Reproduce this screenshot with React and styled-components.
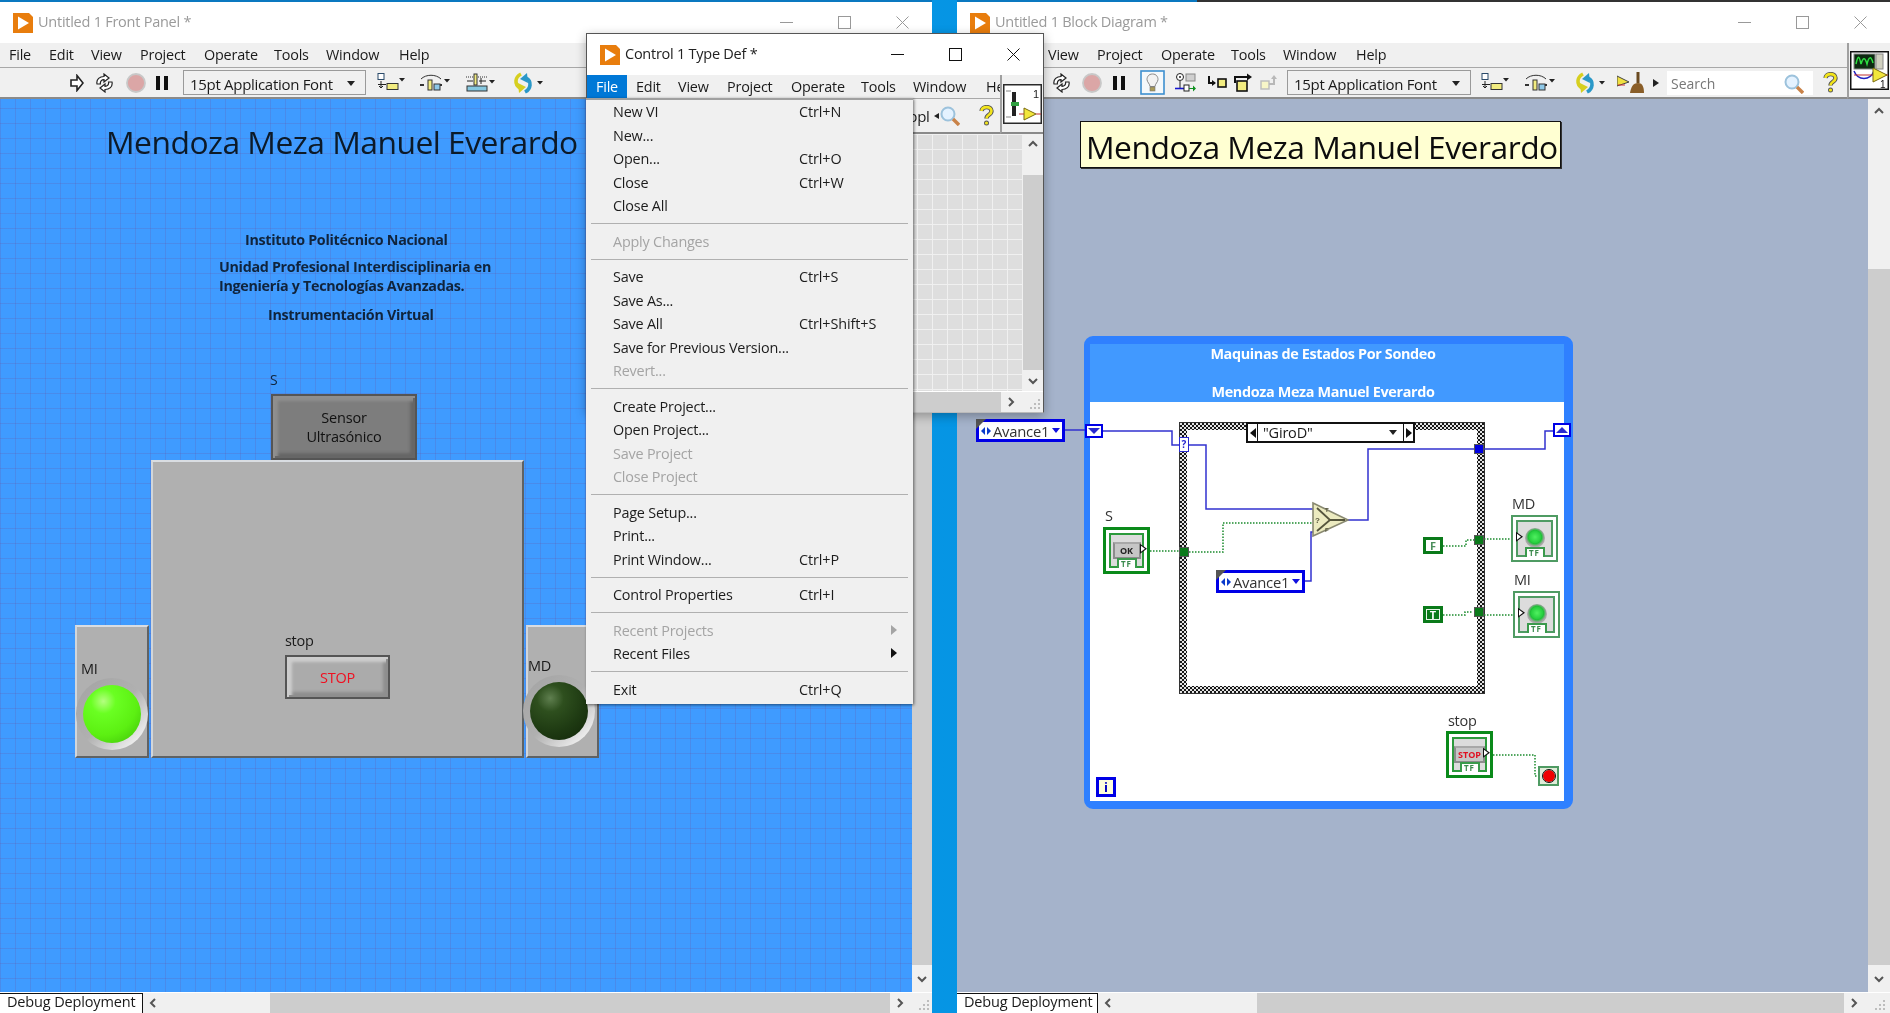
import React from "react";
import styled, { createGlobalStyle } from "styled-components";

const Global = createGlobalStyle`
  html, body { margin: 0; padding: 0; background: #0090e0; overflow: hidden; }
  * { box-sizing: border-box; }
`;

const UI = `"Open Sans", "Noto Sans", "Liberation Sans", sans-serif`;

const Desktop = styled.div`
  position: relative;
  width: 1890px;
  height: 1013px;
  overflow: hidden;
  font-family: ${UI};
  background: linear-gradient(90deg, #0b8ed8, #009cf0);
  color: #1a1a1a;
  filter: blur(0.35px);
`;

const Window = styled.section`
  position: absolute;
  left: ${(p) => p.$x}px;
  top: ${(p) => p.$y}px;
  width: ${(p) => p.$w}px;
  height: ${(p) => p.$h}px;
  display: flex;
  flex-direction: column;
  background: #f0f0f0;
  ${(p) => (p.$active ? "border: 1px solid #555; border-bottom-color:#bbb; box-shadow: 0 3px 10px rgba(0,0,0,.3);" : "")}
`;

const TopStrip = styled.div`
  height: 2px;
  flex: none;
  background: ${(p) => p.$bg};
`;

const TitleBar = styled.header`
  height: ${(p) => p.$h || 41}px;
  flex: none;
  display: flex;
  align-items: center;
  background: #fff;
  padding-left: ${(p) => p.$pad}px;
`;

const TitleText = styled.span`
  margin-left: 5px;
  margin-bottom: 2px;
  font-size: 14.5px;
  letter-spacing: -0.25px;
  color: ${(p) => (p.$active ? "#222" : "#9a9a9a")};
  white-space: nowrap;
`;

const WinButtons = styled.div`
  margin-left: auto;
  margin-right: 1px;
  display: flex;
`;

const WinButton = styled.span`
  width: 58px;
  height: 30px;
  display: flex;
  align-items: center;
  justify-content: center;
  color: ${(p) => (p.$active ? "#111" : "#999")};
`;

const HeadRow = styled.div`
  display: flex;
  flex: none;
`;

const HeadMain = styled.div`
  flex: 1;
  min-width: 0;
  overflow: hidden;
`;

const MenuBar = styled.nav`
  height: ${(p) => p.$h || 25}px;
  display: flex;
  align-items: center;
  background: #f0f0f0;
  padding-left: ${(p) => p.$pad ?? 9}px;
  padding-bottom: ${(p) => (p.$pad === 0 ? 0 : 2)}px;
  font-size: 14.4px;
  letter-spacing: -0.2px;
  border-bottom: 1px solid #a8a8a8;
  white-space: nowrap;
`;

const MenuEntry = styled.span`
  flex: none;
  width: ${(p) => p.$w}px;
`;

const ActiveEntry = styled.span`
  flex: none;
  width: 40px;
  margin-right: 9px;
  height: 100%;
  padding-left: 9px;
  display: flex;
  align-items: center;
  background: #0078d7;
  color: #fff;
`;

const Toolbar = styled.div`
  height: ${(p) => p.$h || 31}px;
  display: flex;
  align-items: center;
  background: #f0f0f0;
  border-bottom: 2px solid #8a8a8a;
  overflow: hidden;
`;

const Tool = styled.svg`
  flex: none;
  margin-left: ${(p) => p.$ml}px;
  display: block;
`;

const FontBox = styled.div`
  flex: none;
  margin-left: ${(p) => p.$ml}px;
  width: ${(p) => p.$w}px;
  height: 25px;
  border: 1px solid #9a9a9a;
  background: #f0f0f0;
  display: flex;
  align-items: center;
  justify-content: space-between;
  padding: 2px 10px 0 6px;
  font-size: 15px;
  letter-spacing: -0.3px;
  white-space: nowrap;
`;

const ClippedFont = styled.div`
  flex: none;
  margin-left: ${(p) => p.$ml}px;
  font-size: 15px;
  letter-spacing: -0.3px;
  white-space: nowrap;
`;

const Caret = styled.span`
  width: 0;
  height: 0;
  border-left: 4px solid transparent;
  border-right: 4px solid transparent;
  border-top: 5px solid #222;
`;

const SearchField = styled.div`
  flex: none;
  margin-left: ${(p) => p.$ml}px;
  width: 146px;
  height: 24px;
  background: #fff;
  display: flex;
  align-items: center;
  justify-content: space-between;
  padding: 2px 9px 0 4px;
  font-size: 14px;
  color: #777;
`;

const IconPane = styled.aside`
  flex: none;
  width: ${(p) => p.$w}px;
  background: #f0f0f0;
  border-left: 2px solid #a0a0a0;
  border-bottom: 2px solid #8a8a8a;
  display: flex;
  align-items: center;
  justify-content: center;
`;

const WorkRow = styled.div`
  flex: 1;
  min-height: 0;
  display: flex;
`;

const VScroll = styled.div`
  flex: none;
  width: ${(p) => p.$w}px;
  background: #f0f0f0;
  display: flex;
  flex-direction: column;
  align-items: center;
`;

const ChevronZone = styled.div`
  flex: none;
  height: ${(p) => p.$h}px;
  display: flex;
  align-items: center;
  justify-content: center;
`;

const VThumb = styled.div`
  flex: 1;
  width: 100%;
  margin-top: ${(p) => p.$top}px;
  background: #cdcdcd;
`;

const BottomRow = styled.div`
  height: 21px;
  flex: none;
  display: flex;
  align-items: stretch;
  background: #f0f0f0;
  border-top: 1px solid #fff;
`;

const DebugTab = styled.div`
  flex: none;
  width: ${(p) => p.$w}px;
  background: #fff;
  border: 1px solid #111;
  border-left: none;
  border-bottom: none;
  padding-left: ${(p) => p.$pad}px;
  font-size: 14.5px;
  letter-spacing: -0.15px;
  line-height: 16px;
  white-space: nowrap;
`;

const ChevronCell = styled.div`
  flex: none;
  width: 20px;
  display: flex;
  align-items: center;
  justify-content: center;
`;

const HThumb = styled.div`
  flex: none;
  width: ${(p) => p.$w}px;
  margin-left: ${(p) => p.$ml}px;
  background: #cdcdcd;
`;

const Grip = styled.div`
  flex: 1;
  display: flex;
  align-items: flex-end;
  justify-content: flex-end;
  padding: 0 ${(p) => p.$right || 2}px 2px 0;
`;

const PanelCanvas = styled.main`
  position: relative;
  flex: 1;
  background-color: #3f9bff;
  background-image: linear-gradient(rgba(104, 88, 170, 0.24) 1px, transparent 1px),
    linear-gradient(90deg, rgba(104, 88, 170, 0.24) 1px, transparent 1px);
  background-size: 15px 15px;
  background-position: 0 9px;
`;

const DiagramCanvas = styled.main`
  position: relative;
  flex: 1;
  background: #a5b3cb;
  overflow: hidden;
`;

const GridCanvas = styled.main`
  flex: 1;
  background-color: #dedede;
  background-image: linear-gradient(#f0f0f0 1px, transparent 1px),
    linear-gradient(90deg, #f0f0f0 1px, transparent 1px);
  background-size: 15px 15px;
`;

const PanelText = styled.div`
  position: absolute;
  left: ${(p) => p.$x}px;
  top: ${(p) => p.$cy}px;
  transform: translateY(-50%);
  font-size: ${(p) => p.$size || 14}px;
  font-weight: ${(p) => (p.$bold ? 700 : 400)};
  color: ${(p) => p.$color || "#10243c"};
  letter-spacing: ${(p) => p.$ls ?? -0.3}px;
  line-height: ${(p) => p.$lh || 1.2};
  white-space: nowrap;
`;

const Bevel = styled.div`
  position: absolute;
  left: ${(p) => p.$x}px;
  top: ${(p) => p.$y}px;
  width: ${(p) => p.$w}px;
  height: ${(p) => p.$h}px;
  background: #b0b0b0;
  border-top: 2px solid #d9dde2;
  border-left: 2px solid #d2d6da;
  border-right: 2px solid #5f6264;
  border-bottom: 2px solid #5f6264;
`;

const PushButton = styled.div`
  position: absolute;
  left: ${(p) => p.$x}px;
  top: ${(p) => p.$y}px;
  width: ${(p) => p.$w}px;
  height: ${(p) => p.$h}px;
  display: flex;
  align-items: center;
  justify-content: center;
  text-align: center;
  font-size: 14.5px;
  line-height: 19px;
  letter-spacing: -0.2px;
  color: ${(p) => p.$color};
  background: ${(p) => p.$bg};
  border: 2px solid #555;
  box-shadow: inset 2px 2px 0 ${(p) => p.$hi}, inset -2px -2px 0 ${(p) => p.$lo},
    inset 5px 5px 3px ${(p) => p.$hi}, inset -5px -5px 3px ${(p) => p.$lo};
`;

const LedBezel = styled.div`
  position: absolute;
  left: ${(p) => p.$cx - 36}px;
  top: ${(p) => p.$cy - 36}px;
  width: 72px;
  height: 72px;
  border-radius: 50%;
  background: linear-gradient(135deg, #a6a6a6 12%, #b0b0b0 50%, #f0f0f0 88%);
  display: flex;
  align-items: center;
  justify-content: center;
`;

const LedLamp = styled.div`
  width: 58px;
  height: 58px;
  border-radius: 50%;
  background: ${(p) =>
    p.$on
      ? "radial-gradient(circle at 35% 28%, #b4ff80 0, #6aff22 22%, #5cf012 60%, #3cbc08 100%)"
      : "radial-gradient(circle at 35% 28%, #5f7f4f 0, #2e4f1e 24%, #1e3a12 60%, #102408 100%)"};
`;

const TitleTile = styled.div`
  position: absolute;
  left: ${(p) => p.$x}px;
  top: ${(p) => p.$y}px;
  width: 481px;
  height: 47px;
  background: #ffffd2;
  border: 1px solid #111;
  box-shadow: 1px 1px 0 #333;
  font-size: 31.8px;
  line-height: 50px;
  padding-left: 5px;
  letter-spacing: -0.5px;
  white-space: nowrap;
  color: #0c0c0c;
`;

const LoopFrame = styled.div`
  position: absolute;
  left: ${(p) => p.$x}px;
  top: ${(p) => p.$y}px;
  width: 489px;
  height: 473px;
  border: solid #2f80ff;
  border-width: 8px 9px 8px 6px;
  border-radius: 9px;
  display: flex;
  flex-direction: column;
`;

const LoopBand = styled.div`
  flex: none;
  height: 58px;
  background: #4199ff;
  color: #fff;
  font-size: 14.4px;
  font-weight: 700;
  letter-spacing: -0.35px;
  text-align: center;
  display: flex;
  flex-direction: column;
  justify-content: space-between;
  line-height: 20px;
  padding-right: 8px;
`;

const LoopBody = styled.div`
  flex: 1;
  background: #fff;
`;

const CaseFrame = styled.div`
  position: absolute;
  left: ${(p) => p.$x}px;
  top: ${(p) => p.$y}px;
  width: 306px;
  height: 272px;
  padding: 7px;
  border: 1px solid #333;
  background: conic-gradient(#161616 25%, #e4e4e4 0 50%, #161616 0 75%, #e4e4e4 0) 0 0 / 4px 4px;
`;

const CaseInner = styled.div`
  width: 100%;
  height: 100%;
  background: #fff;
`;

const Selector = styled.div`
  position: absolute;
  left: ${(p) => p.$x}px;
  top: ${(p) => p.$y}px;
  width: 169px;
  height: 21px;
  background: #fff;
  border: 2px solid #111;
  display: flex;
  align-items: center;
  font-size: 14.5px;
  letter-spacing: -0.2px;
`;

const SelectorCell = styled.span`
  flex: none;
  width: 10px;
  height: 100%;
  display: flex;
  align-items: center;
  justify-content: center;
  ${(p) => (p.$left ? "border-right: 1.5px solid #111;" : "border-left: 1.5px solid #111;")}
`;

const SelectorValue = styled.span`
  flex: 1;
  padding-left: 5px;
  display: flex;
  align-items: center;
  justify-content: space-between;
  padding-right: 6px;
`;

const Enum = styled.div`
  position: absolute;
  left: ${(p) => p.$x}px;
  top: ${(p) => p.$y}px;
  width: 89px;
  height: 23px;
  border: 3px solid #0000e6;
  background: #fff;
  display: flex;
  align-items: center;
  padding-left: 2px;
  font-size: 14.8px;
  letter-spacing: -0.25px;
  color: #333;
  &::before {
    content: "";
    position: absolute;
    left: -3px;
    top: -3px;
    border-top: 10px solid #555;
    border-right: 10px solid transparent;
  }
`;

const EnumCaret = styled.span`
  margin-left: auto;
  margin-right: 2px;
  width: 0;
  height: 0;
  border-left: 4px solid transparent;
  border-right: 4px solid transparent;
  border-top: 5px solid #1010e0;
`;

const EnumArrows = styled.svg`
  flex: none;
  margin-right: 2px;
`;

const ShiftReg = styled.div`
  position: absolute;
  left: ${(p) => p.$x}px;
  top: ${(p) => p.$y}px;
  width: 18px;
  height: 14px;
  background: #fff;
  border: 2px solid #0000e6;
  display: flex;
  align-items: center;
  justify-content: center;
  &::after {
    content: "";
    border-left: 6px solid transparent;
    border-right: 6px solid transparent;
    ${(p) => (p.$up ? "border-bottom: 6px solid #2a2ad0;" : "border-top: 6px solid #2a2ad0;")}
  }
`;

const CaseTerm = styled.div`
  position: absolute;
  left: ${(p) => p.$x}px;
  top: ${(p) => p.$y}px;
  width: 10px;
  height: 15px;
  background: #fff;
  border: 1px solid #2a2ad0;
  color: #2a2ad0;
  font-size: 10px;
  font-weight: 700;
  line-height: 13px;
  text-align: center;
`;

const Tunnel = styled.div`
  position: absolute;
  left: ${(p) => p.$x}px;
  top: ${(p) => p.$y}px;
  width: 10px;
  height: 10px;
  background: ${(p) => p.$c};
  border: 1px solid #555;
`;

const BoolConst = styled.div`
  position: absolute;
  left: ${(p) => p.$x}px;
  top: ${(p) => p.$y}px;
  width: 20px;
  height: 17px;
  border: 3px solid #0a7a1a;
  background: ${(p) => (p.$on ? "#0a7a1a" : "#fff")};
  color: ${(p) => (p.$on ? "#fff" : "#4d8f5d")};
  font-size: 11px;
  font-weight: 700;
  line-height: 11px;
  text-align: center;
  ${(p) => (p.$on ? "box-shadow: inset 0 0 0 1px #e8f4e8;" : "")}
`;

const Terminal = styled.div`
  position: absolute;
  left: ${(p) => p.$x}px;
  top: ${(p) => p.$y}px;
  width: 47px;
  height: 47px;
  padding: 3px;
  background: #fff;
  border: ${(p) => (p.$indicator ? "2px solid #4f9b63" : "3px solid #0a8a1a")};
`;

const TerminalFace = styled.div`
  position: relative;
  width: 100%;
  height: 100%;
  background: #dcdcdc;
  border: ${(p) => (p.$indicator ? "2px solid #4f9b63" : "2px solid #2c9a3c")};
  display: flex;
  align-items: flex-start;
  justify-content: center;
`;

const TFTab = styled.div`
  position: absolute;
  left: 50%;
  bottom: -2px;
  transform: translateX(-50%);
  width: 20px;
  height: 10px;
  background: #fff;
  border: 2px solid #3a9a4c;
  border-bottom: none;
  color: #3a8a4c;
  font-size: 8px;
  font-weight: 700;
  line-height: 8px;
  text-align: center;
  letter-spacing: 1px;
`;

const TermButton = styled.div`
  margin-top: 7px;
  width: ${(p) => p.$w}px;
  height: 17px;
  background: #c6c6c6;
  border: 2px solid #8c8c8c;
  border-top-color: #a8a8a8;
  font-size: 9px;
  font-weight: 700;
  line-height: 13px;
  text-align: center;
  color: ${(p) => p.$color};
`;

const TermLed = styled.div`
  margin-top: 6px;
  width: 20px;
  height: 20px;
  border-radius: 50%;
  background: radial-gradient(circle at 50% 45%, #50f060 0, #28d040 38%, #20c038 45%, #a4a4a4 62%, #dcdcdc 100%);
`;

const TermArrow = styled.span`
  position: absolute;
  top: 50%;
  ${(p) => (p.$out ? "right: -5px;" : "left: -2px;")}
  transform: translateY(-72%);
  width: 0;
  height: 0;
  border-top: 5px solid transparent;
  border-bottom: 5px solid transparent;
  border-left: 7px solid #111;
  &::after {
    content: "";
    position: absolute;
    left: -6px;
    top: -3px;
    border-top: 3px solid transparent;
    border-bottom: 3px solid transparent;
    border-left: 4px solid #fff;
  }
`;

const LoopCond = styled.div`
  position: absolute;
  left: ${(p) => p.$x}px;
  top: ${(p) => p.$y}px;
  width: 21px;
  height: 20px;
  background: #e0ecd8;
  border: 2px solid #4f9b63;
  display: flex;
  align-items: center;
  justify-content: center;
  &::after {
    content: "";
    width: 12px;
    height: 12px;
    border-radius: 50%;
    background: #f00000;
    outline: 1px solid #111;
  }
`;

const IterTerm = styled.div`
  position: absolute;
  left: ${(p) => p.$x}px;
  top: ${(p) => p.$y}px;
  width: 20px;
  height: 20px;
  background: #ffffdc;
  border: 3px solid #0000e6;
  color: #0000c0;
  font-size: 13px;
  font-weight: 700;
  line-height: 14px;
  text-align: center;
`;

const WireLayer = styled.svg`
  position: absolute;
  left: 0;
  top: 0;
  pointer-events: none;
`;

const FileMenu = styled.div`
  position: absolute;
  left: -1px;
  top: 64px;
  width: 327px;
  height: 606px;
  background: #f0f0f0;
  border-top: 2px solid #a0a0a0;
  box-shadow: 1px 1px 3px rgba(0, 0, 0, 0.55);
  font-size: 14.4px;
  letter-spacing: -0.2px;
  z-index: 3;
`;

const FileItem = styled.div`
  height: 23.5px;
  display: flex;
  align-items: center;
  padding-left: 27px;
  white-space: nowrap;
  color: ${(p) => (p.$disabled ? "#a4a4a4" : "#1c1c1c")};
  position: relative;
`;

const ItemLabel = styled.span`
  flex: none;
  width: 186px;
`;

const ItemKey = styled.span`
  letter-spacing: -0.1px;
`;

const SubArrow = styled.span`
  position: absolute;
  left: 305px;
  top: 6px;
  width: 0;
  height: 0;
  border-top: 5px solid transparent;
  border-bottom: 5px solid transparent;
  border-left: 6px solid ${(p) => (p.$disabled ? "#a4a4a4" : "#111")};
`;

const MenuRule = styled.div`
  height: 12px;
  display: flex;
  align-items: center;
  padding: 0 5px;
  &::after {
    content: "";
    flex: 1;
    height: 1px;
    background: #b0b0b0;
  }
`;

const TileIcon = styled.svg`
  flex: none;
`;

/* ---------- drawings ---------- */

const LvIcon = () => (
  <TileIcon width="20" height="20" viewBox="0 0 20 20">
    <path d="M0 0H16L20 4V20H0Z" fill="#e87d0d" />
    <path d="M5 3.5L16 10L5 16.5Z" fill="#fff" />
  </TileIcon>
);

const Min = () => (
  <svg width="13" height="13" viewBox="0 0 13 13"><path d="M0 6.5H13" stroke="currentColor" /></svg>
);
const Max = () => (
  <svg width="13" height="13" viewBox="0 0 13 13"><rect x=".5" y=".5" width="12" height="12" fill="none" stroke="currentColor" /></svg>
);
const Close = () => (
  <svg width="13" height="13" viewBox="0 0 13 13"><path d="M.5.5L12.5 12.5M12.5.5L.5 12.5" stroke="currentColor" /></svg>
);

const Controls = ({ active }) => (
  <WinButtons>
    <WinButton $active={active}><Min /></WinButton>
    <WinButton $active={active}><Max /></WinButton>
    <WinButton $active={active}><Close /></WinButton>
  </WinButtons>
);

const Menus = ({ h }) => (
  <MenuBar $h={h}>
    <MenuEntry $w={40}>File</MenuEntry>
    <MenuEntry $w={42}>Edit</MenuEntry>
    <MenuEntry $w={49}>View</MenuEntry>
    <MenuEntry $w={64}>Project</MenuEntry>
    <MenuEntry $w={70}>Operate</MenuEntry>
    <MenuEntry $w={52}>Tools</MenuEntry>
    <MenuEntry $w={73}>Window</MenuEntry>
    <MenuEntry $w={40}>Help</MenuEntry>
  </MenuBar>
);

const RunArrow = ({ ml }) => (
  <Tool $ml={ml} width="14" height="18" viewBox="0 0 14 18">
    <path d="M1 6H7V1.5L13 9L7 16.5V12H1Z" fill="#fff" stroke="#222" strokeWidth="1.6" />
  </Tool>
);

const Rerun = ({ ml }) => (
  <Tool $ml={ml} width="19" height="20" viewBox="0 0 19 20">
    <path d="M2 11C1 6 5 3.5 9 3.5V1L14 5L9 9V6.6C6.5 6.6 5 8.5 5.4 11Z" fill="#fff" stroke="#222" strokeWidth="1.2" />
    <path d="M17 9C18 14 14 16.5 10 16.5V19L5 15L10 11V13.4C12.5 13.4 14 11.5 13.6 9Z" fill="#fff" stroke="#222" strokeWidth="1.2" />
  </Tool>
);

const Abort = ({ ml }) => (
  <Tool $ml={ml} width="20" height="22" viewBox="0 0 20 22">
    <circle cx="10" cy="11" r="9" fill="#dba6a6" stroke="#c8c8c8" strokeWidth="1.8" />
  </Tool>
);

const Pause = ({ ml }) => (
  <Tool $ml={ml} width="12" height="14" viewBox="0 0 12 14">
    <rect width="4" height="14" fill="#111" />
    <rect x="8" width="4" height="14" fill="#111" />
  </Tool>
);

const DropTri = ({ x, y }) => <path d={`M${x} ${y}h6l-3 3.5z`} fill="#222" />;

const AlignTool = ({ ml }) => (
  <Tool $ml={ml} width="29" height="20" viewBox="0 0 29 20">
    <rect x="1" y=".5" width="6" height="6" fill="#fff" stroke="#2a4a6a" />
    <path d="M1 11.5H9M4 8V15L2 13M4 15L6 13" fill="none" stroke="#222" />
    <rect x="10" y="10.5" width="11" height="6" fill="#f2ec80" stroke="#333" />
    <DropTri x={22} y={5} />
  </Tool>
);

const DistTool = ({ ml }) => (
  <Tool $ml={ml} width="31" height="20" viewBox="0 0 31 20">
    <path d="M1 6C6 1 16 1 21 6" fill="none" stroke="#333" />
    <path d="M0 12H4M17 12H22" stroke="#333" strokeWidth="2" />
    <rect x="8" y="7" width="4" height="10" fill="#f2ec80" stroke="#333" />
    <rect x="14" y="11" width="6" height="6" fill="#8ec8e8" stroke="#333" />
    <DropTri x={24} y={6} />
  </Tool>
);

const ResizeTool = ({ ml }) => (
  <Tool $ml={ml} width="31" height="20" viewBox="0 0 31 20">
    <path d="M1 4H22" stroke="#333" strokeDasharray="1 1" />
    <rect x="2" y="13" width="20" height="5" fill="#86c8e0" stroke="#333" />
    <rect x="9" y="1" width="3" height="11" fill="#f2ec80" stroke="#333" />
    <path d="M2 8H8M14 8H21M16 5V11" stroke="#222" />
    <DropTri x={24} y={7} />
  </Tool>
);

const ReorderTool = ({ ml }) => (
  <Tool $ml={ml} width="33" height="22" viewBox="0 0 33 22">
    <path d="M10 2C4 5 3 12 9 16" fill="none" stroke="#d6cf20" strokeWidth="3.6" />
    <path d="M7 11L15 15L8 21Z" fill="#d6cf20" />
    <path d="M14 20C20 17 21 9 15 6" fill="none" stroke="#2a98c8" strokeWidth="3.6" />
    <path d="M17 11L9 7L16 1Z" fill="#2a98c8" />
    <DropTri x={26} y={9} />
  </Tool>
);

const Bulb = ({ ml }) => (
  <Tool $ml={ml} width="25" height="25" viewBox="0 0 25 25">
    <rect x="1" y="1" width="23" height="23" fill="#f4f8fb" stroke="#3d8fd0" strokeWidth="1.6" />
    <path d="M12.5 4C8.5 4 7 7 7 9.5C7 12 10 14 10 16.5H15C15 14 18 12 18 9.5C18 7 16.5 4 12.5 4Z" fill="#f2f2f2" stroke="#888" />
    <rect x="10" y="17" width="5" height="4" fill="#a89a58" stroke="#777" strokeWidth=".6" />
  </Tool>
);

const Probe = ({ ml }) => (
  <Tool $ml={ml} width="21" height="22" viewBox="0 0 21 22">
    <circle cx="5" cy="5" r="3.5" fill="#fff" stroke="#222" />
    <circle cx="5" cy="5" r="1" fill="#222" />
    <path d="M5 9V17" stroke="#222" />
    <rect x="11" y="2" width="9" height="7" fill="#cfcfcf" stroke="#888" />
    <path d="M0 16.5H9" stroke="#1414d0" strokeWidth="1.6" />
    <rect x="9" y="13" width="5" height="6" fill="#fff" stroke="#222" />
    <path d="M14 16H18V13.5L21 16.5L18 19.5V17H14Z" fill="#109020" />
  </Tool>
);

const StepInto = ({ ml }) => (
  <Tool $ml={ml} width="20" height="16" viewBox="0 0 20 16">
    <path d="M2 1V8H8" fill="none" stroke="#111" strokeWidth="2" />
    <path d="M5 5L9 8L5 11Z" fill="#111" />
    <rect x="11" y="4" width="8" height="8" fill="#f2ec80" stroke="#111" strokeWidth="1.6" />
  </Tool>
);

const StepOver = ({ ml }) => (
  <Tool $ml={ml} width="18" height="20" viewBox="0 0 18 20">
    <path d="M1 10V4H13" fill="none" stroke="#111" strokeWidth="2" />
    <path d="M13 .5L18 4L13 7.5Z" fill="#111" />
    <rect x="3" y="8" width="10" height="10" fill="#f2ec80" stroke="#111" strokeWidth="1.6" />
  </Tool>
);

const StepOut = ({ ml }) => (
  <Tool $ml={ml} width="18" height="16" viewBox="0 0 18 16">
    <rect x="1" y="6" width="8" height="8" fill="#f8f6c8" stroke="#bbb" strokeWidth="1.4" />
    <path d="M9 9H14V3" fill="none" stroke="#b8b8b8" strokeWidth="2" />
    <path d="M11 4L14 0L17 4Z" fill="#b8b8b8" />
  </Tool>
);

const CleanUp = ({ ml }) => (
  <Tool $ml={ml} width="28" height="24" viewBox="0 0 28 24">
    <path d="M0 5L12 11L0 15Z" fill="#f0e040" stroke="#444" />
    <path d="M1 14H8" stroke="#d03030" />
    <path d="M21 1V12" stroke="#6a4a20" strokeWidth="3" />
    <path d="M13 22C14 16 16 12 21 12C26 12 27 17 27 22Z" fill="#8a5e28" />
  </Tool>
);

const SmallTri = ({ ml, left }) => (
  <Tool $ml={ml} width="6" height="8" viewBox="0 0 6 8">
    <path d={left ? "M6 1L1 4L6 7Z" : "M0 0L6 4L0 8Z"} fill="#222" />
  </Tool>
);

const Magnifier = ({ ml = 0 }) => (
  <Tool $ml={ml} width="20" height="20" viewBox="0 0 20 20">
    <circle cx="8" cy="8" r="6.5" fill="#e4f2ff" stroke="#9cc2dc" strokeWidth="2" />
    <path d="M13 13L19 19" stroke="#c98248" strokeWidth="3.4" />
  </Tool>
);

const Help = ({ ml }) => (
  <Tool $ml={ml} width="15" height="21" viewBox="0 0 15 21">
    <path d="M2.5 6C3 .8 12.5 .8 12.5 6C12.5 10 7.5 9.5 7.5 13.5" fill="none" stroke="#555" strokeWidth="4.4" />
    <circle cx="7.5" cy="18" r="2.5" fill="#555" />
    <path d="M2.5 6C3 .8 12.5 .8 12.5 6C12.5 10 7.5 9.5 7.5 13.5" fill="none" stroke="#f2e41c" strokeWidth="2.6" />
    <circle cx="7.5" cy="18" r="1.6" fill="#f2e41c" />
  </Tool>
);

const CtlIcon = () => (
  <svg width="39" height="40" viewBox="0 0 39 40" style={{ display: "block" }}>
    <rect x=".75" y=".75" width="37.5" height="38.5" fill="#fff" stroke="#2a2a2a" strokeWidth="1.5" />
    <path d="M11 8V32" stroke="#222" strokeWidth="4" />
    <path d="M8 18H16V22H8Z" fill="#30a040" />
    <path d="M3 7H8M3 33H8" stroke="#888" />
    <path d="M21 24L33 30L21 36Z" fill="#f2e63c" stroke="#7a6a10" />
    <path d="M33 30H38M16 30H21" stroke="#c03030" />
    <text x="30" y="14" fontFamily="Liberation Sans, sans-serif" fontSize="11" fill="#222">1</text>
  </svg>
);

const ScopeIcon = () => (
  <svg width="39" height="39" viewBox="0 0 39 39" style={{ display: "block" }}>
    <rect x=".75" y=".75" width="37.5" height="37.5" fill="#fff" stroke="#111" strokeWidth="1.5" />
    <rect x="4" y="3" width="21" height="15" fill="#0d2a10" stroke="#888" />
    <path d="M6 13C8 4 9 4 11 13C13 6 15 6 17 13C19 5 21 5 23 12" fill="none" stroke="#2ce040" strokeWidth="1.5" />
    <rect x="26" y="3" width="7" height="15" fill="#d0d0c0" stroke="#888" />
    <path d="M4 20C8 30 20 30 24 20" fill="none" stroke="#2020c0" strokeWidth="1.5" />
    <path d="M4 24H38" stroke="#c03030" />
    <path d="M23 17L37 24L23 31Z" fill="#f2e63c" stroke="#7a6a10" />
    <text x="30" y="37" fontFamily="Liberation Sans, sans-serif" fontSize="10" fill="#111">1</text>
  </svg>
);

const Chev = ({ dir, size = 12, c = "#555" }) => {
  const d = {
    up: "M2 8L6 4L10 8",
    down: "M2 4L6 8L10 4",
    left: "M8 2L4 6L8 10",
    right: "M4 2L8 6L4 10",
  }[dir];
  return (
    <svg width={size} height={size} viewBox="0 0 12 12" style={{ display: "block" }}>
      <path d={d} fill="none" stroke={c} strokeWidth="2" />
    </svg>
  );
};

const GripDots = () => (
  <svg width="12" height="12" viewBox="0 0 12 12" style={{ display: "block" }}>
    {[[9, 1], [5, 5], [9, 5], [1, 9], [5, 9], [9, 9]].map(([x, y]) => (
      <rect key={`${x}-${y}`} x={x} y={y} width="2" height="2" fill="#bdbdbd" />
    ))}
  </svg>
);

const EnumMark = () => (
  <EnumArrows width="10" height="10" viewBox="0 0 10 10">
    <path d="M4 1V9L0 5ZM6 1V9L10 5Z" fill="#0a3acc" />
  </EnumArrows>
);

/* ---------- block-diagram coordinates are measured on the screen ---------- */
const bx = (x) => x - 957;
const by = (y) => y - 100;

const FILE_MENU = [
  ["New VI", "Ctrl+N"], ["New..."], ["Open...", "Ctrl+O"], ["Close", "Ctrl+W"], ["Close All"], "-",
  ["Apply Changes", null, "off"], "-",
  ["Save", "Ctrl+S"], ["Save As..."], ["Save All", "Ctrl+Shift+S"], ["Save for Previous Version..."], ["Revert...", null, "off"], "-",
  ["Create Project..."], ["Open Project..."], ["Save Project", null, "off"], ["Close Project", null, "off"], "-",
  ["Page Setup..."], ["Print..."], ["Print Window...", "Ctrl+P"], "-",
  ["Control Properties", "Ctrl+I"], "-",
  ["Recent Projects", null, "off", true], ["Recent Files", null, null, true], "-",
  ["Exit", "Ctrl+Q"],
];

const FrontPanel = () => (
  <Window $x={0} $y={0} $w={932} $h={1013}>
    <TopStrip $bg="#0a78c0" />
    <TitleBar $pad={13}>
      <LvIcon />
      <TitleText>Untitled 1 Front Panel *</TitleText>
      <Controls />
    </TitleBar>
    <Menus />
    <Toolbar>
      <RunArrow ml={70} />
      <Rerun ml={11} />
      <Abort ml={12} />
      <Pause ml={10} />
      <FontBox $ml={15} $w={183}>15pt Application Font<Caret /></FontBox>
      <AlignTool ml={11} />
      <DistTool ml={14} />
      <ResizeTool ml={14} />
      <ReorderTool ml={15} />
    </Toolbar>
    <WorkRow>
      <PanelCanvas>
        <PanelText $x={106} $cy={43} $size={31.8} $color="#0c1a28" $ls={-0.5}>Mendoza Meza Manuel Everardo</PanelText>
        <PanelText $x={245} $cy={141} $bold $size={14.3} $ls={-0.3}>Instituto Politécnico Nacional</PanelText>
        <PanelText $x={219} $cy={177} $bold $size={14.3} $lh={1.33} $ls={-0.3}>
          Unidad Profesional Interdisciplinaria en<br />Ingeniería y Tecnologías Avanzadas.
        </PanelText>
        <PanelText $x={268} $cy={216} $bold $size={14.3} $ls={-0.3}>Instrumentación Virtual</PanelText>

        <PanelText $x={270} $cy={281} $size={14}>S</PanelText>
        <PushButton $x={271} $y={295} $w={146} $h={66} $bg="#7d7d7d" $hi="#8f8f8f" $lo="#666" $color="#111">
          Sensor<br />Ultrasónico
        </PushButton>
        <Bevel $x={75} $y={526} $w={74} $h={133} />
        <Bevel $x={526} $y={526} $w={73} $h={133} />
        <Bevel $x={151} $y={361} $w={373} $h={298} />
        <PanelText $x={81} $cy={570} $size={14.5} $color="#1a1a1a">MI</PanelText>
        <PanelText $x={528} $cy={567} $size={14.5} $color="#1a1a1a">MD</PanelText>
        <LedBezel $cx={112} $cy={615}><LedLamp $on /></LedBezel>
        <LedBezel $cx={559} $cy={612}><LedLamp /></LedBezel>
        <PanelText $x={285} $cy={542} $size={14.5} $color="#1a1a1a">stop</PanelText>
        <PushButton $x={285} $y={556} $w={105} $h={44} $bg="#ababab" $hi="#cdcdcd" $lo="#8e8e8e" $color="#f01020">
          STOP
        </PushButton>
      </PanelCanvas>
      <VScroll $w={20}>
        <ChevronZone $h={20}><Chev dir="up" /></ChevronZone>
        <VThumb $top={30} />
        <ChevronZone $h={27}><Chev dir="down" /></ChevronZone>
      </VScroll>
    </WorkRow>
    <BottomRow>
      <DebugTab $w={143} $pad={7}>Debug Deployment</DebugTab>
      <ChevronCell><Chev dir="left" /></ChevronCell>
      <HThumb $ml={107} $w={620} />
      <ChevronCell><Chev dir="right" /></ChevronCell>
      <Grip><GripDots /></Grip>
    </BottomRow>
  </Window>
);

const BlockDiagram = () => (
  <Window $x={957} $y={0} $w={933} $h={1013}>
    <TopStrip $bg="linear-gradient(90deg,#0a78c0 240px,#333 240px)" />
    <TitleBar $pad={13}>
      <LvIcon />
      <TitleText>Untitled 1 Block Diagram *</TitleText>
      <Controls />
    </TitleBar>
    <HeadRow>
      <HeadMain>
        <Menus />
        <Toolbar>
          <Rerun ml={95} />
          <Abort ml={11} />
          <Pause ml={11} />
          <Bulb ml={15} />
          <Probe ml={10} />
          <StepInto ml={11} />
          <StepOver ml={7} />
          <StepOut ml={8} />
          <FontBox $ml={9} $w={184}>15pt Application Font<Caret /></FontBox>
          <AlignTool ml={10} />
          <DistTool ml={15} />
          <ReorderTool ml={17} />
          <CleanUp ml={11} />
          <SmallTri ml={8} />
          <SearchField $ml={8}>Search<Magnifier /></SearchField>
          <Help ml={10} />
        </Toolbar>
      </HeadMain>
      <IconPane $w={43}><ScopeIcon /></IconPane>
    </HeadRow>
    <WorkRow>
      <DiagramCanvas>
        <TitleTile $x={bx(1080)} $y={by(122)}>Mendoza Meza Manuel Everardo</TitleTile>

        <LoopFrame $x={bx(1084)} $y={by(337)}>
          <LoopBand>
            <span>Maquinas de Estados Por Sondeo</span>
            <span>Mendoza Meza Manuel Everardo</span>
          </LoopBand>
          <LoopBody />
        </LoopFrame>

        <CaseFrame $x={bx(1179)} $y={by(423)}><CaseInner /></CaseFrame>
        <Selector $x={bx(1246)} $y={by(423)}>
          <SelectorCell $left><svg width="6" height="10" viewBox="0 0 6 10"><path d="M6 0V10L0 5Z" fill="#111" /></svg></SelectorCell>
          <SelectorValue>"GiroD"<Caret /></SelectorValue>
          <SelectorCell><svg width="6" height="10" viewBox="0 0 6 10"><path d="M0 0V10L6 5Z" fill="#111" /></svg></SelectorCell>
        </Selector>

        <WireLayer width="911" height="892" viewBox="957 100 911 892">
          <g fill="none" stroke="#3232d0" strokeWidth="1.5">
            <path d="M1065 431H1086M1102 432H1172V446H1180M1188 446H1206V510H1314M1305 582H1311V533H1316M1348 521H1368V450H1474M1484 450H1545V432H1553" />
          </g>
          <g fill="none" stroke="#1a8a2c" strokeWidth="1.5" strokeDasharray="1.5 1.5">
            <path d="M1150 552H1179M1189 553H1223V524H1314M1443 547H1466V541H1474M1484 540H1511M1443 616H1465V613H1473M1484 616H1513M1493 756H1535V777H1538" />
          </g>
          <polygon points="1313,504 1348,521 1313,537" fill="#ecebc0" stroke="#888870" strokeWidth="1.6" />
          <path d="M1317 509L1330 521L1317 532M1330 521H1345" fill="none" stroke="#55553c" strokeWidth="1.8" />
          <text x="1315" y="524" fontFamily="Liberation Sans, sans-serif" fontSize="8" fontWeight="700" fill="#55553c">?</text>
          <text x="1325" y="513" fontFamily="Liberation Sans, sans-serif" fontSize="6" fontWeight="700" fill="#55553c">T</text>
          <text x="1325" y="533" fontFamily="Liberation Sans, sans-serif" fontSize="6" fontWeight="700" fill="#55553c">F</text>
        </WireLayer>

        <Enum $x={bx(976)} $y={by(420)}><EnumMark />Avance1<EnumCaret /></Enum>
        <ShiftReg $x={bx(1085)} $y={by(425)} />
        <ShiftReg $x={bx(1553)} $y={by(424)} $up />
        <CaseTerm $x={bx(1179)} $y={by(438)}>?</CaseTerm>
        <Enum $x={bx(1216)} $y={by(571)}><EnumMark />Avance1<EnumCaret /></Enum>

        <Tunnel $x={bx(1179)} $y={by(548)} $c="#0a7a1a" />
        <Tunnel $x={bx(1474)} $y={by(445)} $c="#0000e0" />
        <Tunnel $x={bx(1474)} $y={by(536)} $c="#0a7a1a" />
        <Tunnel $x={bx(1474)} $y={by(608)} $c="#0a7a1a" />

        <BoolConst $x={bx(1423)} $y={by(538)}>F</BoolConst>
        <BoolConst $x={bx(1423)} $y={by(607)} $on>T</BoolConst>

        <PanelText $x={bx(1105)} $cy={by(517)} $size={14.5} $color="#333">S</PanelText>
        <Terminal $x={bx(1103)} $y={by(528)}>
          <TerminalFace>
            <TermButton $w={28} $color="#222">OK</TermButton>
            <TermArrow $out />
            <TFTab>TF</TFTab>
          </TerminalFace>
        </Terminal>

        <PanelText $x={bx(1512)} $cy={by(505)} $size={14.5} $color="#333">MD</PanelText>
        <Terminal $x={bx(1511)} $y={by(516)} $indicator>
          <TerminalFace $indicator>
            <TermLed />
            <TermArrow />
            <TFTab>TF</TFTab>
          </TerminalFace>
        </Terminal>

        <PanelText $x={bx(1514)} $cy={by(581)} $size={14.5} $color="#333">MI</PanelText>
        <Terminal $x={bx(1513)} $y={by(592)} $indicator>
          <TerminalFace $indicator>
            <TermLed />
            <TermArrow />
            <TFTab>TF</TFTab>
          </TerminalFace>
        </Terminal>

        <PanelText $x={bx(1448)} $cy={by(722)} $size={14.5} $color="#333">stop</PanelText>
        <Terminal $x={bx(1446)} $y={by(732)}>
          <TerminalFace>
            <TermButton $w={34} $color="#e01020">STOP</TermButton>
            <TermArrow $out />
            <TFTab>TF</TFTab>
          </TerminalFace>
        </Terminal>

        <LoopCond $x={bx(1538)} $y={by(767)} />
        <IterTerm $x={bx(1096)} $y={by(778)}>i</IterTerm>
      </DiagramCanvas>
      <VScroll $w={22}>
        <ChevronZone $h={24}><Chev dir="up" /></ChevronZone>
        <VThumb $top={146} />
        <ChevronZone $h={27}><Chev dir="down" /></ChevronZone>
      </VScroll>
    </WorkRow>
    <BottomRow>
      <DebugTab $w={141} $pad={7}>Debug Deployment</DebugTab>
      <ChevronCell><Chev dir="left" /></ChevronCell>
      <HThumb $ml={139} $w={587} />
      <ChevronCell><Chev dir="right" /></ChevronCell>
      <Grip $right={4}><GripDots /></Grip>
    </BottomRow>
  </Window>
);

const ControlWindow = () => (
  <Window $x={586} $y={33} $w={458} $h={380} $active>
    <TitleBar $h={41} $pad={13}>
      <LvIcon />
      <TitleText $active>Control 1 Type Def *</TitleText>
      <Controls active />
    </TitleBar>
    <HeadRow>
      <HeadMain>
        <MenuBar $pad={0} $h={24}>
          <ActiveEntry>File</ActiveEntry>
          <MenuEntry $w={42}>Edit</MenuEntry>
          <MenuEntry $w={49}>View</MenuEntry>
          <MenuEntry $w={64}>Project</MenuEntry>
          <MenuEntry $w={70}>Operate</MenuEntry>
          <MenuEntry $w={52}>Tools</MenuEntry>
          <MenuEntry $w={73}>Window</MenuEntry>
          <MenuEntry $w={40}>Help</MenuEntry>
        </MenuBar>
        <Toolbar $h={35}>
          <ClippedFont $ml={278}>15pt Appl</ClippedFont>
          <SmallTri ml={3} left />
          <Magnifier ml={1} />
          <Help ml={19} />
        </Toolbar>
      </HeadMain>
      <IconPane $w={43}><CtlIcon /></IconPane>
    </HeadRow>
    <WorkRow>
      <GridCanvas />
      <VScroll $w={20}>
        <ChevronZone $h={20}><Chev dir="up" /></ChevronZone>
        <VThumb $top={21} />
        <ChevronZone $h={21}><Chev dir="down" /></ChevronZone>
      </VScroll>
    </WorkRow>
    <BottomRow>
      <HThumb $ml={0} $w={414} />
      <ChevronCell><Chev dir="right" /></ChevronCell>
      <Grip><GripDots /></Grip>
    </BottomRow>
    <FileMenu>
      {FILE_MENU.map((it, i) =>
        it === "-" ? (
          <MenuRule key={i} />
        ) : (
          <FileItem key={i} $disabled={it[2] === "off"}>
            <ItemLabel>{it[0]}</ItemLabel>
            {it[1] && <ItemKey>{it[1]}</ItemKey>}
            {it[3] && <SubArrow $disabled={it[2] === "off"} />}
          </FileItem>
        )
      )}
    </FileMenu>
  </Window>
);

export default function App() {
  return (
    <>
      <Global />
      <Desktop>
        <FrontPanel />
        <BlockDiagram />
        <ControlWindow />
      </Desktop>
    </>
  );
}
